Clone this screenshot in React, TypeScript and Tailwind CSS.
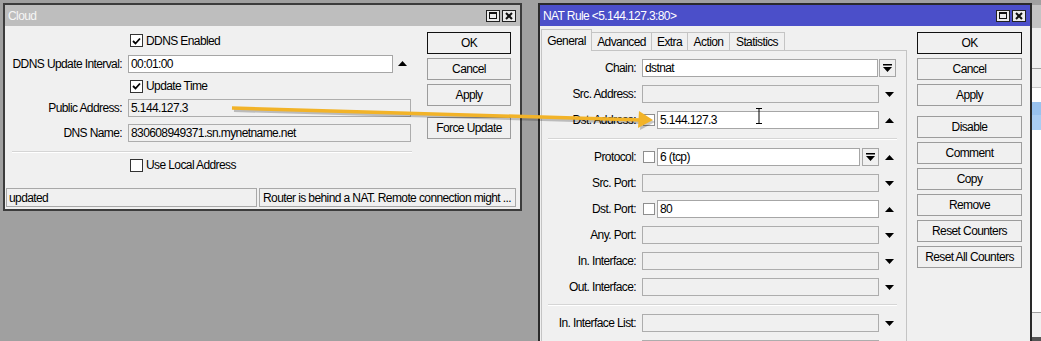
import React from "react";

function Up() {
  return (
    <svg width="9" height="5" viewBox="0 0 9 5" className="block">
      <polygon points="0,5 4.5,0 9,5" fill="#000" />
    </svg>
  );
}
function Down() {
  return (
    <svg width="9" height="5" viewBox="0 0 9 5" className="block">
      <polygon points="0,0 9,0 4.5,5" fill="#000" />
    </svg>
  );
}
function Combo() {
  return (
    <div className="w-[17px] h-[18px] border border-[#a6a6a6] bg-[#f0f0f0] flex items-center justify-center shrink-0">
      <svg width="9" height="8" viewBox="0 0 9 8" className="block">
        <rect x="0" y="0" width="9" height="1.5" fill="#000" />
        <polygon points="0,3 9,3 4.5,8" fill="#000" />
      </svg>
    </div>
  );
}
function Check({ checked, light }: { checked?: boolean; light?: boolean }) {
  return (
    <div
      className={
        light
          ? "w-[12px] h-[12px] border border-[#8e8e8e] bg-white shrink-0"
          : "w-[13px] h-[13px] border border-[#333] bg-white shrink-0 flex items-center justify-center"
      }
    >
      {checked && (
        <svg width="9" height="8" viewBox="0 0 9 8" className="block">
          <path d="M1 4 L3.5 6.5 L8 1.5" stroke="#000" strokeWidth="1.8" fill="none" />
        </svg>
      )}
    </div>
  );
}
function Btn({ children, def }: { children: React.ReactNode; def?: boolean }) {
  return (
    <div
      className={
        def
          ? "h-[22px] border-[1.5px] border-[#111] bg-[#f0f0f0] flex items-center justify-center text-black whitespace-nowrap"
          : "h-[22px] border border-[#9c9c9c] bg-[#f0f0f0] flex items-center justify-center text-black whitespace-nowrap"
      }
    >
      {children}
    </div>
  );
}
function TitleButtons() {
  return (
    <div className="flex gap-[2px]">
      <div className="w-[14px] h-[12px] border border-[#222] bg-[#ececec] flex items-center justify-center">
        <div className="w-[8px] h-[7px] border border-[#111] border-t-2" />
      </div>
      <div className="w-[14px] h-[12px] border border-[#222] bg-[#ececec] flex items-center justify-center">
        <svg width="8" height="8" viewBox="0 0 8 8" className="block">
          <path d="M1 1 L7 7 M7 1 L1 7" stroke="#111" strokeWidth="2" />
        </svg>
      </div>
    </div>
  );
}

function NatRow({ label, children, tail }: { label: string; children: React.ReactNode; tail?: React.ReactNode }) {
  return (
    <div className="h-[26px] flex items-center shrink-0">
      <div className="w-[94px] text-right whitespace-nowrap">{label}</div>
      <div className="ml-[6px] flex items-center">{children}</div>
      {tail}
    </div>
  );
}

export default function App() {
  return (
    <div className="w-[1041px] h-[341px] relative overflow-hidden bg-[#a0a0a0] font-['Liberation_Sans',Arial,sans-serif] text-[12px] tracking-[-0.6px] leading-none text-black">
      {/* window behind on the right */}
      <div className="absolute left-[1032px] top-0 w-[9px] h-[341px] flex flex-col">
        <div className="h-[5px] bg-[#a0a0a0]" />
        <div className="h-[23px] bg-[#c4c4c4]" />
        <div className="h-[40px] bg-[#f0f0f0]" />
        <div className="h-[1px] bg-[#a0a0a0]" />
        <div className="h-[18px] bg-[#f0f0f0]" />
        <div className="h-[1px] bg-[#c8c8c8]" />
        <div className="h-[14px] bg-white" />
        <div className="h-[13px] bg-[#99c2ee]" />
        <div className="h-[15px] bg-[#aacdf2]" />
        <div className="h-[182px] bg-white" />
        <div className="h-[1px] bg-[#a0a0a0]" />
        <div className="h-[24px] bg-[#f0f0f0]" />
        <div className="flex-1 bg-[#555]" />
      </div>

      {/* Cloud window */}
      <div className="absolute left-[3px] top-[3px] w-[519px] h-[208px] border-2 border-[#3c3c3c] bg-[#f0f0f0] flex flex-col">
        <div className="h-[21px] bg-[#bebebe] text-[#f6f6f6] pl-[3px] pr-[4px] flex items-center justify-between shrink-0">
          <span>Cloud</span>
          <TitleButtons />
        </div>
        <div className="flex-1 flex flex-col">
          <div className="flex flex-1">
            <div className="w-[422px] flex flex-col pt-[3px]">
              <div className="h-[23px] flex items-center">
                <div className="w-[125px]" />
                <Check checked />
                <span className="ml-[3px]">DDNS Enabled</span>
              </div>
              <div className="h-[23px] flex items-center">
                <div className="w-[117px] text-right whitespace-nowrap">DDNS Update Interval:</div>
                <div className="ml-[6px] w-[265px] h-[18px] border border-[#a6a6a6] bg-white flex items-center pl-[2px]">00:01:00</div>
                <div className="ml-[5px]"><Up /></div>
              </div>
              <div className="h-[22px] flex items-center">
                <div className="w-[125px]" />
                <Check checked />
                <span className="ml-[3px]">Update Time</span>
              </div>
              <div className="h-[21px] flex items-center">
                <div className="w-[117px] text-right whitespace-nowrap">Public Address:</div>
                <div className="ml-[6px] w-[283px] h-[18px] border border-[#adadad] bg-[#f0f0f0] flex items-center pl-[2px]">5.144.127.3</div>
              </div>
              <div className="mt-[3px] h-[24px] flex items-center">
                <div className="w-[117px] text-right whitespace-nowrap">DNS Name:</div>
                <div className="ml-[6px] w-[283px] h-[18px] border border-[#adadad] bg-[#f0f0f0] flex items-center pl-[2px]">830608949371.sn.mynetname.net</div>
              </div>
              <div className="mt-[6px] ml-[7px] w-[400px] h-[2px] border-t border-[#d5d5d5] border-b border-b-white" />
              <div className="mt-[1px] h-[22px] flex items-center">
                <div className="w-[125px]" />
                <Check />
                <span className="ml-[3px]">Use Local Address</span>
              </div>
            </div>
            <div className="w-[84px] flex flex-col pt-[6px] gap-[4px]">
              <Btn def>OK</Btn>
              <Btn>Cancel</Btn>
              <Btn>Apply</Btn>
              <div className="mt-[7px]"><Btn>Force Update</Btn></div>
            </div>
          </div>
          <div className="h-[19px] mb-[2px] ml-[1px] mr-[4px] flex gap-[2px]">
            <div className="w-[251px] border border-[#a8a8a8] flex items-center pl-[2px]">updated</div>
            <div className="flex-1 border border-[#a8a8a8] flex items-center pl-[3px] whitespace-nowrap overflow-hidden">Router is behind a NAT. Remote connection might ...</div>
          </div>
        </div>
      </div>

      {/* NAT Rule window */}
      <div className="absolute left-[538px] top-[3px] w-[494px] h-[360px] border-2 border-[#2a2a2a] bg-[#f0f0f0] flex flex-col">
        <div className="h-[21px] bg-[#4b4fc9] text-white pl-[3px] pr-[4px] flex items-center justify-between shrink-0">
          <span>NAT Rule &lt;5.144.127.3:80&gt;</span>
          <TitleButtons />
        </div>
        <div className="flex-1 flex">
          <div className="ml-[1px] w-[366px] flex flex-col">
            <div className="h-[24px] flex items-end shrink-0 relative z-10">
              <div className="w-[51px] h-[22px] -mb-[1px] border border-b-0 border-[#c4c4c4] bg-[#f0f0f0] flex items-center justify-center">General</div>
              <div className="w-[60px] h-[18px] border border-b-0 border-l-0 border-[#c4c4c4] bg-[#f0f0f0] flex items-center justify-center">Advanced</div>
              <div className="w-[36px] h-[18px] border border-b-0 border-l-0 border-[#c4c4c4] bg-[#f0f0f0] flex items-center justify-center">Extra</div>
              <div className="w-[42px] h-[18px] border border-b-0 border-l-0 border-[#c4c4c4] bg-[#f0f0f0] flex items-center justify-center">Action</div>
              <div className="w-[55px] h-[18px] border border-b-0 border-l-0 border-[#c4c4c4] bg-[#f0f0f0] flex items-center justify-center">Statistics</div>
            </div>
            <div className="flex-1 border-t border-r border-l border-[#c4c4c4] flex flex-col pt-[4px]">
              <NatRow label="Chain:" tail={<div className="ml-[1px]"><Combo /></div>}>
                <div className="w-[236px] h-[18px] border border-[#a6a6a6] bg-white flex items-center pl-[2px]">dstnat</div>
              </NatRow>
              <NatRow label="Src. Address:" tail={<div className="ml-[6px]"><Down /></div>}>
                <div className="w-[237px] h-[18px] border border-[#adadad] bg-[#f0f0f0]" />
              </NatRow>
              <NatRow label="Dst. Address:" tail={<div className="ml-[6px]"><Up /></div>}>
                <div className="ml-[1px]"><Check light /></div>
                <div className="ml-[2px] w-[222px] h-[18px] border border-[#a6a6a6] bg-white flex items-center pl-[2px]">5.144.127.3</div>
              </NatRow>
              <div className="h-[11px] flex items-center shrink-0">
                <div className="ml-[6px] w-[349px] h-[2px] border-t border-[#d5d5d5] border-b border-b-white" />
              </div>
              <NatRow label="Protocol:" tail={<div className="ml-[6px]"><Up /></div>}>
                <div className="ml-[1px]"><Check light /></div>
                <div className="ml-[2px] w-[203px] h-[18px] border border-[#a6a6a6] bg-white flex items-center pl-[2px]">6 (tcp)</div>
                <div className="ml-[2px]"><Combo /></div>
              </NatRow>
              <NatRow label="Src. Port:" tail={<div className="ml-[6px]"><Down /></div>}>
                <div className="w-[237px] h-[18px] border border-[#adadad] bg-[#f0f0f0]" />
              </NatRow>
              <NatRow label="Dst. Port:" tail={<div className="ml-[6px]"><Up /></div>}>
                <div className="ml-[1px]"><Check light /></div>
                <div className="ml-[2px] w-[222px] h-[18px] border border-[#a6a6a6] bg-white flex items-center pl-[2px]">80</div>
              </NatRow>
              <NatRow label="Any. Port:" tail={<div className="ml-[6px]"><Down /></div>}>
                <div className="w-[237px] h-[18px] border border-[#adadad] bg-[#f0f0f0]" />
              </NatRow>
              <NatRow label="In. Interface:" tail={<div className="ml-[6px]"><Down /></div>}>
                <div className="w-[237px] h-[18px] border border-[#adadad] bg-[#f0f0f0]" />
              </NatRow>
              <NatRow label="Out. Interface:" tail={<div className="ml-[6px]"><Down /></div>}>
                <div className="w-[237px] h-[18px] border border-[#adadad] bg-[#f0f0f0]" />
              </NatRow>
              <div className="h-[10px] flex items-center shrink-0">
                <div className="ml-[6px] w-[349px] h-[2px] border-t border-[#d5d5d5] border-b border-b-white" />
              </div>
              <NatRow label="In. Interface List:" tail={<div className="ml-[6px]"><Down /></div>}>
                <div className="w-[237px] h-[18px] border border-[#adadad] bg-[#f0f0f0]" />
              </NatRow>
              <NatRow label="">
                <div className="w-[237px] h-[18px] border border-[#adadad] bg-[#f0f0f0]" />
              </NatRow>
            </div>
          </div>
          <div className="ml-[10px] w-[105px] flex flex-col pt-[6px] gap-[4px]">
            <Btn def>OK</Btn>
            <Btn>Cancel</Btn>
            <Btn>Apply</Btn>
            <div className="mt-[6px]"><Btn>Disable</Btn></div>
            <Btn>Comment</Btn>
            <Btn>Copy</Btn>
            <Btn>Remove</Btn>
            <Btn>Reset Counters</Btn>
            <Btn>Reset All Counters</Btn>
          </div>
        </div>
      </div>

      {/* arrow and cursor overlay */}
      <svg className="absolute left-0 top-0 pointer-events-none" width="1041" height="341" viewBox="0 0 1041 341">
        <line x1="234" y1="110" x2="642" y2="122" stroke="rgba(0,0,0,0.22)" strokeWidth="4" />
        <polygon points="655,122 641,114 640,130" fill="rgba(0,0,0,0.22)" />
        <line x1="232" y1="108" x2="641" y2="120" stroke="#f2b328" strokeWidth="3.5" />
        <polygon points="653,120 639,111 638,128" fill="#f2b328" />
        <path d="M756 108.5 H762 M759 108.5 V123.5 M756 123.5 H762" stroke="#000" strokeWidth="1" fill="none" />
      </svg>
    </div>
  );
}
